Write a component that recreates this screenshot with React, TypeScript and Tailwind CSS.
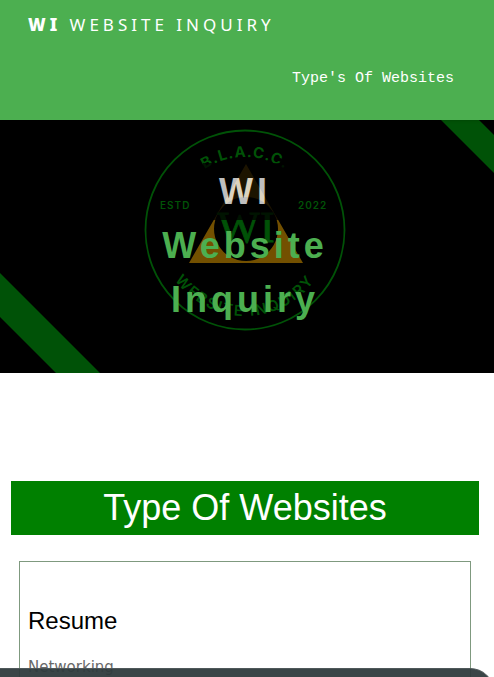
function Emblem() {
  return (
    <svg
      className="absolute inset-0 h-full w-full"
      viewBox="0 0 494 253"
      preserveAspectRatio="xMidYMid slice"
      aria-hidden="true"
    >
      <defs>
        <path id="arc-top" d="M172 110 A73 73 0 0 1 318 110" />
        <path id="arc-bottom" d="M159 110 A86 86 0 0 0 331 110" />
      </defs>
      <path d="M0 153 L100 253 H56 L0 197 Z" fill="#005207" />
      <path d="M441 0 H479 L494 15 V53 Z" fill="#005207" />
      <circle cx="245" cy="110" r="99.5" fill="none" stroke="#005207" strokeWidth="1.8" />
      <path
        fillRule="evenodd"
        d="M246 44 L303 143 H189 Z M246 77 a32 32 0 1 0 0.01 0 Z"
        fill="#735000"
      />
      <g fill="#005207" fontFamily="Inter, sans-serif" fontWeight="700">
        <text fontSize="15" letterSpacing="1" textAnchor="middle">
          <textPath href="#arc-top" startOffset="50%">B.L.A.C.C.</textPath>
        </text>
        <text fontSize="15" fontWeight="600" letterSpacing="2" textAnchor="middle">
          <textPath href="#arc-bottom" startOffset="50%">WEBSITE INQUIRY</textPath>
        </text>
        <g fontSize="10" fontWeight="600" letterSpacing="1">
          <text x="160" y="89">ESTD</text>
          <text x="298" y="89">2022</text>
        </g>
      </g>
      <text
        x="246"
        y="122"
        fill="#005207"
        stroke="#005207"
        strokeWidth="0.8"
        fontFamily="'Liberation Serif', serif"
        fontSize="45"
        textAnchor="middle"
      >
        WI
      </text>
    </svg>
  );
}

export default function App() {
  return (
    <div className="min-h-screen bg-white font-['DejaVu_Sans',sans-serif] text-[15px] leading-6 text-black">
      <header className="relative z-10 h-[120px] bg-[#4caf50] px-3 text-white shadow-sm">
        <a
          href="#home"
          className="inline-block px-4 pt-[13px] pb-3 font-['Noto_Sans',sans-serif] text-[17px] leading-6 tracking-[4px]"
        >
          <b className="font-black">WI</b> WEBSITE INQUIRY
        </a>
        <nav className="flex justify-end pt-[18px] pr-3">
          <a
            href="#types"
            className="px-4 font-['Liberation_Mono',monospace] text-[15px] leading-6"
          >
            Type's Of Websites
          </a>
        </nav>
      </header>

      <section id="home" className="relative h-[253px] overflow-hidden bg-black">
        <Emblem />
        <h1 className="relative mx-auto w-[180px] pt-[45px] pr-1 text-center font-['Liberation_Sans',sans-serif] text-4xl leading-[54px] font-bold tracking-[4px] text-[#4caf50]">
          <span className="bg-black px-4 py-2 text-white opacity-75">WI</span> <span>Website Inquiry</span>
        </h1>
      </section>

      <main className="pt-[108px] pr-[15px] pl-[11px]">
        <h2
          id="types"
          className="bg-[#008000] text-center font-['Liberation_Sans',sans-serif] text-4xl leading-[54px] text-white"
        >
          Type Of Websites
        </h2>
        <article className="mx-2 mt-[26px] border border-[#7f997f] px-2 pt-10 pb-4">
          <h3 className="font-['Liberation_Sans',sans-serif] text-2xl leading-[38px]">Resume</h3>
          <p className="mt-[15px] text-[#696969]">Networking</p>
        </article>
      </main>

      <div className="fixed inset-x-0 bottom-0 z-20 h-[9px] overflow-hidden">
        <div className="h-12 rounded-tr-3xl border-t border-[#4f585a] bg-[#2f3b3d]/95" />
      </div>
    </div>
  );
}
